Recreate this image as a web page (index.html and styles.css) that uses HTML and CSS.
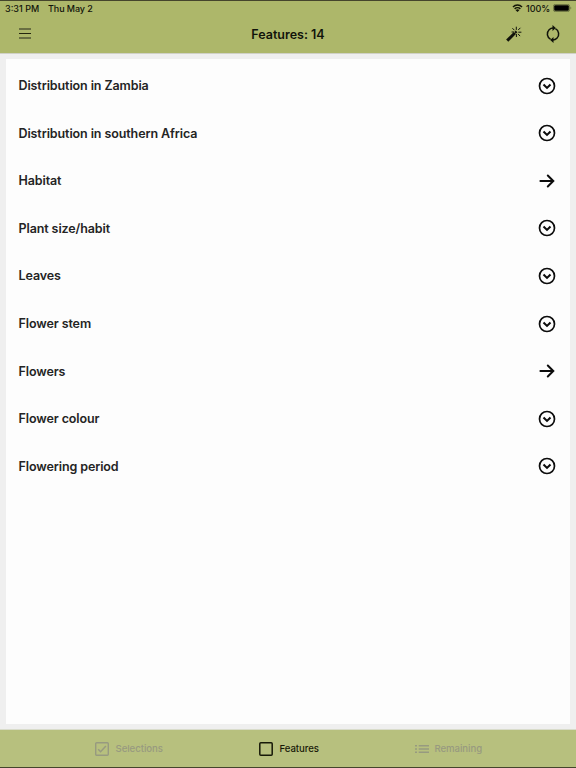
FILE: index.html
```html
<!DOCTYPE html>
<html lang="en">

<head>
    <meta charset="utf-8">
    <title>Features</title>
    <link rel="stylesheet" href="styles.css">
</head>

<body>

    <svg class="sprite" width="0" height="0">
        <symbol id="expand" viewBox="0 0 18 18">
            <circle cx="9" cy="9" r="7.5" stroke-width="1.7" />
            <path d="M5.5 7.5 9 10.9l3.5-3.4" stroke-width="2.1" />
        </symbol>
        <symbol id="arrow" viewBox="0 0 18 18">
            <path d="M2.4 9h12.8M9.8 3.5 15.3 9 9.8 14.5" stroke-width="2" stroke-linecap="round" />
        </symbol>
    </svg>

    <div class="header">
        <div class="status-bar">
            <span class="status-time">3:31 PM</span>
            <span class="status-date">Thu May 2</span>
            <svg class="wifi" viewBox="0 0 12 9">
                <path d="M.9 3.3a7.3 7.3 0 0 1 10.2 0M2.8 5.5a4.6 4.6 0 0 1 6.4 0" fill="none" stroke="#141608" stroke-width="1.7" />
                <path d="M6 9 3.9 6.9a2.9 2.9 0 0 1 4.2 0z" fill="#141608" />
            </svg>
            <span class="status-percent">100%</span>
            <svg class="battery" viewBox="0 0 19 8">
                <rect x=".4" y=".4" width="16.2" height="7.2" rx="2" fill="none" stroke="#5c6338" stroke-width=".8" />
                <rect x="1.2" y="1.2" width="14.6" height="5.6" rx="1.1" fill="#000" />
                <path d="M17.5 2.7a1.5 1.5 0 0 1 0 2.6z" fill="#5c6338" />
            </svg>
        </div>
        <div class="nav-bar">
            <button class="nav-button menu">
                <svg width="12" height="12" viewBox="0 0 12 12">
                    <path d="M0 1h12M0 10h12" stroke="#696f42" stroke-width="2" />
                    <path d="M0 5.5h12" stroke="#24260f" stroke-width="1" />
                </svg>
            </button>
            <span class="nav-title">Features: 14</span>
            <div class="nav-actions">
                <button class="nav-button">
                    <svg width="16" height="16" viewBox="0 0 16 16" fill="none" stroke="#11130a">
                        <path d="M1.2 14.6 8.9 7" stroke-width="3" />
                        <path d="m9.1 6.9 1.5-1.5" stroke-width="2.2" />
                        <path d="M10.3 3.9V.7M12.2 4l2.2-2.2M12.3 6.2h3.1M12 7.9l2.1 2.2M8.4 4.2 6.4 2.2M10.4 8v3M8 6H5.6" stroke-width="1" />
                    </svg>
                </button>
                <button class="nav-button">
                    <svg width="16" height="18" viewBox="0 0 16 18">
                        <path d="M5.6 14.3A6 6 0 0 1 4.1 4.7 6 6 0 0 1 8.7 3M10.4 3.7a6 6 0 0 1 1.5 9.6A6 6 0 0 1 7.3 15" fill="none" stroke="#11130a" stroke-width="1.5" />
                        <path d="M7.5 0v6l3.3-3zM8.5 12v6l-3.3-3z" fill="#11130a" />
                    </svg>
                </button>
            </div>
        </div>
    </div>

    <div class="content">
        <ul class="feature-list">
            <li class="feature"><span>Distribution in Zambia</span><svg class="icon"><use href="#expand" /></svg></li>
            <li class="feature"><span>Distribution in southern Africa</span><svg class="icon"><use href="#expand" /></svg></li>
            <li class="feature"><span>Habitat</span><svg class="icon"><use href="#arrow" /></svg></li>
            <li class="feature"><span>Plant size/habit</span><svg class="icon"><use href="#expand" /></svg></li>
            <li class="feature"><span>Leaves</span><svg class="icon"><use href="#expand" /></svg></li>
            <li class="feature"><span>Flower stem</span><svg class="icon"><use href="#expand" /></svg></li>
            <li class="feature"><span>Flowers</span><svg class="icon"><use href="#arrow" /></svg></li>
            <li class="feature"><span>Flower colour</span><svg class="icon"><use href="#expand" /></svg></li>
            <li class="feature"><span>Flowering period</span><svg class="icon"><use href="#expand" /></svg></li>
        </ul>
    </div>

    <div class="tab-bar">
        <button class="tab-button tab-selections">
            <svg width="14" height="14" viewBox="0 0 14 14" fill="none" stroke="currentColor">
                <rect x=".7" y=".7" width="12.6" height="12.6" rx="1" stroke-width="1.4" />
                <path d="m3.2 7.2 2.4 2.5L10.9 4" stroke-width="1.5" />
            </svg>
            <span>Selections</span>
        </button>
        <button class="tab-button tab-features active">
            <svg width="14" height="14" viewBox="0 0 14 14" fill="none" stroke="currentColor">
                <rect x=".8" y=".8" width="12.4" height="12.4" rx="1" stroke-width="1.5" />
            </svg>
            <span>Features</span>
        </button>
        <button class="tab-button tab-remaining">
            <svg width="14" height="8" viewBox="0 0 14 8" stroke="currentColor" stroke-width="1.6">
                <path d="M0 .8h2M0 4h2M0 7.2h2M3.7 .8H14M3.7 4H14M3.7 7.2H14" />
            </svg>
            <span>Remaining</span>
        </button>
    </div>

</body>

</html>
```

FILE: styles.css
```css
* {
    box-sizing: border-box;
}

body {
    margin: 0;
    height: 768px;
    display: flex;
    flex-direction: column;
    overflow: hidden;
    background-color: #efefef;
    color: #242424;
    font-family: Inter, "Liberation Sans", sans-serif;
}

.sprite {
    display: none;
}

button {
    border: none;
    padding: 0;
    background: none;
    color: inherit;
    font-family: inherit;
}

svg {
    display: block;
    flex: none;
}

/* Header */
.header {
    height: 54px;
    border-top: 1px solid #45452c;
    border-bottom: 1px solid #d0d1c7;
    background-color: #adb76a;
    color: #11130a;
}

.status-bar {
    display: flex;
    align-items: center;
    height: 14px;
    padding: 0 4px 0 5px;
    font-size: 9px;
    font-weight: 500;
    white-space: nowrap;
}

.status-time {
    width: 43px;
}

.status-date {
    flex: 1;
    letter-spacing: -0.08px;
}

.wifi {
    width: 11px;
    height: 8px;
    margin-right: 3px;
}

.status-percent {
    width: 24px;
    margin-right: 3px;
}

.battery {
    width: 19px;
    height: 8px;
}

.nav-bar {
    display: grid;
    grid-template-columns: 1fr auto 1fr;
    align-items: center;
    height: 38px;
    padding: 0 16px 0 19px;
}

.nav-button {
    display: flex;
}

.nav-title {
    padding-right: 3px;
    font-size: 12.5px;
    font-weight: 600;
}

.nav-actions {
    display: flex;
    justify-content: flex-end;
    align-items: center;
    gap: 23px;
    margin-right: -0.5px;
}

/* Feature list */
.content {
    flex: 1;
    padding: 5px 6px;
}

.feature-list {
    height: 100%;
    margin: 0;
    padding: 3px 14px 0 12.5px;
    list-style: none;
    background-color: #fdfdfd;
}

.feature {
    display: flex;
    align-items: center;
    justify-content: space-between;
    height: 47.55px;
    font-size: 12.5px;
    font-weight: 600;
    letter-spacing: -0.1px;
}

.icon {
    width: 18px;
    height: 18px;
    fill: none;
    stroke: #0c0c0c;
}

/* Bottom tabs */
.tab-bar {
    display: flex;
    height: 39px;
    border-top: 1px solid #d9dccb;
    border-bottom: 1px solid #45452c;
    background-color: #b7c07e;
    color: #979a80;
}

.tab-button {
    display: flex;
    align-items: center;
    gap: 6.5px;
    font-size: 9.6px;
    font-weight: 500;
    letter-spacing: -0.05px;
}

.tab-selections {
    width: 164px;
    margin-left: 95px;
}

.tab-features {
    width: 156px;
}

.tab-remaining {
    gap: 5.5px;
}

.tab-button.active {
    color: #171908;
}
```
